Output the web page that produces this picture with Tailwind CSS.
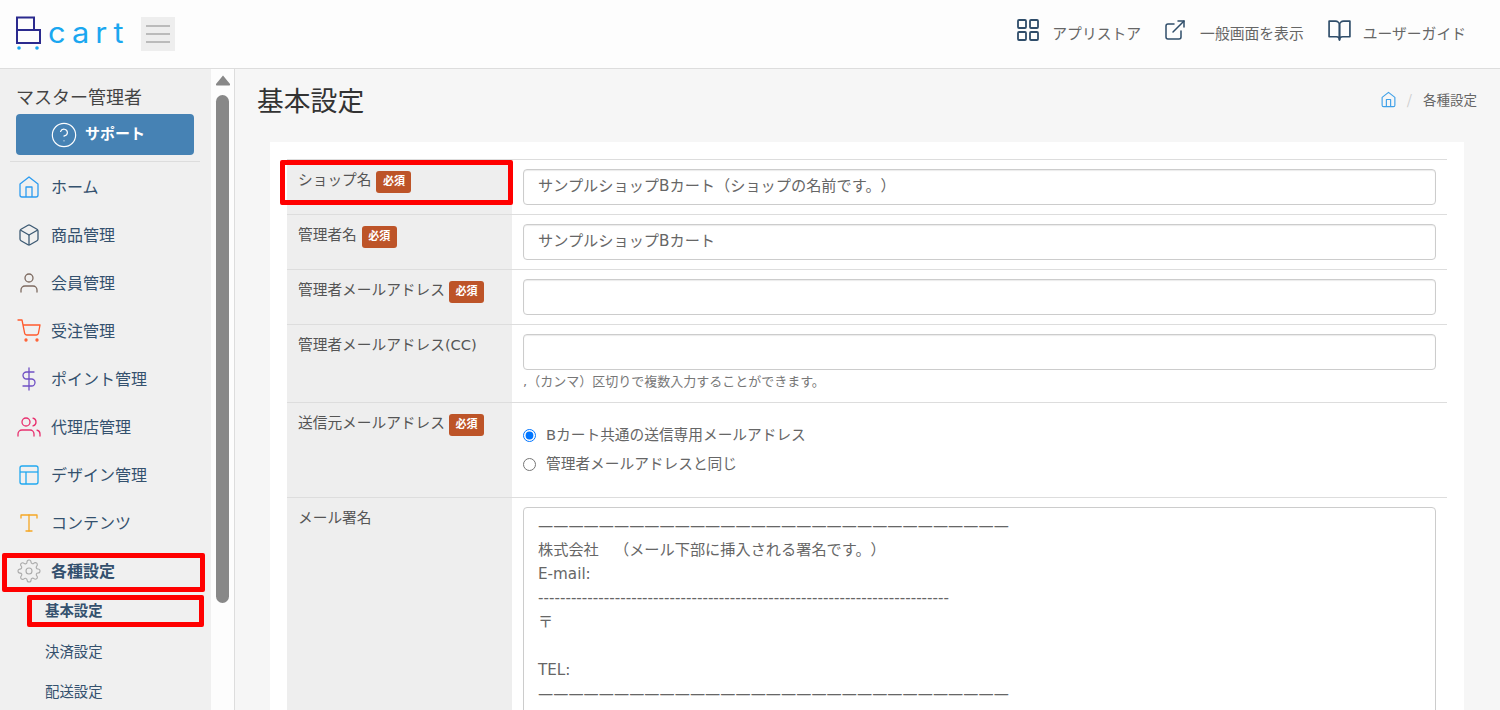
<!DOCTYPE html>
<html lang="ja">
<head>
<meta charset="utf-8">
<script src="https://cdn.jsdelivr.net/npm/@tailwindcss/browser@4"></script>
<title>基本設定</title>
</head>
<body class="h-[710px] w-[1500px] overflow-hidden bg-[#f6f6f6] font-['DejaVu_Sans','Noto_Sans_CJK_JP',sans-serif] text-[14.7px] text-[#555] [text-spacing-trim:space-all]">
<header class="flex h-[69px] items-center border-b border-[#ddd] bg-[#fdfdfd] pr-[34px] font-['Noto_Sans_CJK_JP',sans-serif]">
  <div class="relative flex h-full w-[141px] shrink-0 items-start pl-4 pt-4">
    <svg width="26" height="36" viewBox="0 0 26 36" fill="none"><path d="M1 14V1.500h17V14M1 14h23v13H1z" stroke="#2b2a8e" stroke-width="2"/><circle cx="3" cy="32" r="1.800" fill="#1aa7f0"/><circle cx="21" cy="32" r="1.800" fill="#1aa7f0"/></svg>
    <span class="ml-[6px] mt-[-1px] origin-left scale-x-110 font-['Inter',sans-serif] text-[28px] leading-[36px] font-normal tracking-[5.5px] text-[#1aa7f0]">cart</span>
  </div>
  <button class="flex h-[34px] w-[34px] shrink-0 flex-col items-center justify-center gap-[6px] bg-[#eeeeee]">
    <span class="block h-[2px] w-[24px] bg-[#bbb]"></span><span class="block h-[2px] w-[24px] bg-[#bbb]"></span><span class="block h-[2px] w-[24px] bg-[#bbb]"></span>
  </button>
  <nav class="mb-2 ml-auto flex items-center gap-[24px] text-[14.8px] text-[#666]">
    <a class="flex items-center gap-3">
      <svg width="24" height="24" viewBox="0 0 24 24" fill="none" stroke="#2f4d6a" stroke-width="1.8"><rect x="2" y="2" width="8" height="8" rx="1"/><rect x="14" y="2" width="8" height="8" rx="1"/><rect x="2" y="14" width="8" height="8" rx="1"/><rect x="14" y="14" width="8" height="8" rx="1"/></svg>
      <span class="mt-[6px]">アプリストア</span>
    </a>
    <a class="ml-[-2px] flex items-center gap-[13px]">
      <svg width="24" height="24" viewBox="0 0 24 24" fill="none" stroke="#2f4d6a" stroke-width="1.5" stroke-linecap="round" stroke-linejoin="round"><path d="M18 13v6a2 2 0 0 1-2 2H5a2 2 0 0 1-2-2V8a2 2 0 0 1 2-2h6"/><polyline points="15 3 21 3 21 9"/><line x1="10" y1="14" x2="21" y2="3"/></svg>
      <span class="mt-[6px]">一般画面を表示</span>
    </a>
    <a class="ml-[-1px] flex items-center gap-[11px]">
      <svg width="25" height="25" viewBox="0 0 24 24" fill="none" stroke="#2f4d6a" stroke-width="1.6" stroke-linejoin="round"><path d="M2 3h6a4 4 0 0 1 4 4v14a3 3 0 0 0-3-3H2z"/><path d="M22 3h-6a4 4 0 0 0-4 4v14a3 3 0 0 1 3-3h7z"/></svg>
      <span class="mt-[6px]">ユーザーガイド</span>
    </a>
  </nav>
</header>

<div class="flex h-[641px]">
  <aside class="flex h-full w-[211px] shrink-0 flex-col overflow-hidden bg-[#f0f0f0] font-['Open_Sans','Noto_Sans_CJK_JP',sans-serif] text-[16px] text-[#34516e]">
    <p class="px-4 pt-[15px] text-[18px] leading-[27px] text-[#444]">マスター管理者</p>
    <a class="mx-4 mt-[3px] flex h-[41px] w-[178px] items-center rounded bg-[#4682b4] pl-[34px] text-[15px] font-bold text-white">
      <svg width="28" height="28" viewBox="0 0 24 24" fill="none" stroke="#fff" stroke-width="1" stroke-linecap="round"><circle cx="12" cy="12" r="10"/><path d="M9.090 9a3 3 0 0 1 5.830 1c0 2-3 3-3 3"/><line x1="12" y1="17" x2="12.010" y2="17"/></svg>
      <span class="mb-[2px] ml-[7px]">サポート</span>
    </a>
    <div class="mx-[10px] mt-[6px] h-px w-[190px] bg-[#ddd]"></div>
    <ul class="mt-px">
      <li class="flex h-[48px] items-center gap-[10px] pl-[17px]"><svg width="24" height="24" viewBox="0 0 24 24" fill="none" stroke="#2d9cf0" stroke-width="1.3" stroke-linejoin="round"><path d="M3 9l9-7 9 7v11a2 2 0 0 1-2 2H5a2 2 0 0 1-2-2z"/><polyline points="9 22 9 12 15 12 15 22"/></svg>ホーム</li>
      <li class="flex h-[48px] items-center gap-[10px] pl-[17px]"><svg width="24" height="24" viewBox="0 0 24 24" fill="none" stroke="#3d5a73" stroke-width="1.3" stroke-linejoin="round"><path d="M21 16V8a2 2 0 0 0-1-1.730l-7-4a2 2 0 0 0-2 0l-7 4A2 2 0 0 0 3 8v8a2 2 0 0 0 1 1.730l7 4a2 2 0 0 0 2 0l7-4A2 2 0 0 0 21 16z"/><polyline points="3.270 6.960 12 12.010 20.730 6.960"/><line x1="12" y1="22.080" x2="12" y2="12"/></svg>商品管理</li>
      <li class="flex h-[48px] items-center gap-[10px] pl-[17px]"><svg width="24" height="24" viewBox="0 0 24 24" fill="none" stroke="#7d6a60" stroke-width="1.3" stroke-linecap="round"><path d="M20 21v-2a4 4 0 0 0-4-4H8a4 4 0 0 0-4 4v2"/><circle cx="12" cy="7" r="4"/></svg>会員管理</li>
      <li class="flex h-[48px] items-center gap-[10px] pl-[17px]"><svg width="24" height="24" viewBox="0 0 24 24" fill="none" stroke="#ff5a2c" stroke-width="1.3" stroke-linecap="round" stroke-linejoin="round"><circle cx="9" cy="21" r="1"/><circle cx="20" cy="21" r="1"/><path d="M1 1h4l2.680 13.390a2 2 0 0 0 2 1.610h9.720a2 2 0 0 0 2-1.610L23 6H6"/></svg>受注管理</li>
      <li class="flex h-[48px] items-center gap-[10px] pl-[17px]"><svg width="24" height="24" viewBox="0 0 24 24" fill="none" stroke="#6f4fc4" stroke-width="1.3" stroke-linecap="round" stroke-linejoin="round"><line x1="12" y1="1" x2="12" y2="23"/><path d="M17 5H9.500a3.500 3.500 0 0 0 0 7h5a3.500 3.500 0 0 1 0 7H6"/></svg>ポイント管理</li>
      <li class="flex h-[48px] items-center gap-[10px] pl-[17px]"><svg width="24" height="24" viewBox="0 0 24 24" fill="none" stroke="#e8316f" stroke-width="1.3" stroke-linecap="round" stroke-linejoin="round"><path d="M17 21v-2a4 4 0 0 0-4-4H5a4 4 0 0 0-4 4v2"/><circle cx="9" cy="7" r="4"/><path d="M23 21v-2a4 4 0 0 0-3-3.870"/><path d="M16 3.130a4 4 0 0 1 0 7.750"/></svg>代理店管理</li>
      <li class="flex h-[48px] items-center gap-[10px] pl-[17px]"><svg width="24" height="24" viewBox="0 0 24 24" fill="none" stroke="#20a8f0" stroke-width="1.3" stroke-linejoin="round"><rect x="3" y="3" width="18" height="18" rx="2"/><line x1="3" y1="9" x2="21" y2="9"/><line x1="9" y1="21" x2="9" y2="9"/></svg>デザイン管理</li>
      <li class="flex h-[48px] items-center gap-[10px] pl-[17px]"><svg width="24" height="24" viewBox="0 0 24 24" fill="none" stroke="#f5a623" stroke-width="1.3" stroke-linecap="round" stroke-linejoin="round"><polyline points="4 7 4 4 20 4 20 7"/><line x1="9" y1="20" x2="15" y2="20"/><line x1="12" y1="4" x2="12" y2="20"/></svg>コンテンツ</li>
      <li class="relative flex h-[48px] items-center gap-[10px] pl-[17px] font-bold"><svg width="24" height="24" viewBox="0 0 24 24" fill="none" stroke="#aaa" stroke-width="1.1" stroke-linecap="round" stroke-linejoin="round"><circle cx="12" cy="12" r="3"/><path d="M19.400 15a1.650 1.650 0 0 0 .33 1.820l.06.06a2 2 0 0 1 0 2.830 2 2 0 0 1-2.830 0l-.06-.06a1.650 1.650 0 0 0-1.820-.33 1.650 1.650 0 0 0-1 1.510V21a2 2 0 0 1-2 2 2 2 0 0 1-2-2v-.09A1.650 1.650 0 0 0 9 19.400a1.650 1.650 0 0 0-1.820.33l-.06.06a2 2 0 0 1-2.830 0 2 2 0 0 1 0-2.830l.06-.06a1.650 1.650 0 0 0 .33-1.820 1.650 1.650 0 0 0-1.510-1H3a2 2 0 0 1-2-2 2 2 0 0 1 2-2h.09A1.650 1.650 0 0 0 4.600 9a1.650 1.650 0 0 0-.33-1.820l-.06-.06a2 2 0 0 1 0-2.830 2 2 0 0 1 2.830 0l.06.06a1.650 1.650 0 0 0 1.820.33H9a1.650 1.650 0 0 0 1-1.510V3a2 2 0 0 1 2-2 2 2 0 0 1 2 2v.09a1.650 1.650 0 0 0 1 1.510 1.650 1.650 0 0 0 1.820-.33l.06-.06a2 2 0 0 1 2.830 0 2 2 0 0 1 0 2.830l-.06.06a1.650 1.650 0 0 0-.33 1.820V9a1.650 1.650 0 0 0 1.510 1H21a2 2 0 0 1 2 2 2 2 0 0 1-2 2h-.09a1.650 1.650 0 0 0-1.510 1z"/></svg>各種設定
        <span class="absolute left-[2px] top-[6px] h-[39px] w-[203px] rounded-[2px] border-[5px] border-[#ff0000]"></span></li>
    </ul>
    <ul class="flex flex-col gap-[8.5px] text-[14.4px]">
      <li class="relative flex h-[32px] items-center pl-[45px] font-bold">基本設定
        <span class="absolute left-[27px] top-0 h-[32px] w-[177px] rounded-[2px] border-[5px] border-[#ff0000]"></span></li>
      <li class="flex h-[32px] items-center pl-[45px]">決済設定</li>
      <li class="flex h-[32px] items-center pl-[45px]">配送設定</li>
    </ul>
  </aside>

  <div class="flex h-full w-[24px] shrink-0 flex-col items-center border-r border-[#ddd] bg-[#fdfdfd] pt-[6px]">
    <svg width="16" height="11" viewBox="0 0 16 11"><path d="M8 0.500l7 8.500q.5 1.500-1 1.500H2q-1.500 0-1-1.500z" fill="#888"/></svg>
    <div class="ml-[-1px] mt-[9px] h-[508px] w-[13px] rounded-full bg-[#888]"></div>
  </div>

  <main class="relative min-w-0 flex-1 pl-[35px] pr-[36px]">
    <div class="flex h-[73px] items-start justify-between font-['Noto_Sans_CJK_JP',sans-serif]">
      <h1 class="ml-[-13px] mt-[11px] text-[26.8px] leading-[40px] text-[#333]">基本設定</h1>
      <div class="mr-[-13px] mt-[20px] flex items-center text-[13.5px] text-[#666]">
        <svg width="17" height="17" viewBox="0 0 24 24" fill="none" stroke="#3ea0e8" stroke-width="1.6" stroke-linejoin="round"><path d="M3 9l9-7 9 7v11a2 2 0 0 1-2 2H5a2 2 0 0 1-2-2z"/><polyline points="9 22 9 12 15 12 15 22"/></svg>
        <span class="mx-[10px] text-[#ccc]">/</span>
        <span class="ml-[1px]">各種設定</span>
      </div>
    </div>

    <section class="h-[600px] bg-white px-[17px] pt-[17px]">
      <div class="relative flex border-t border-[#ddd]">
        <div class="w-[225px] shrink-0 bg-[#eee] pl-[11px] pt-[8px] leading-[24px]">ショップ名<span class="ml-[5px] inline-flex h-[22px] w-[35px] items-center justify-center rounded-[3px] bg-[#bd5428] text-[11px] font-bold text-white">必須</span></div>
        <div class="flex-1 pb-[9px] pl-[11px] pr-[11px] pt-[9px]"><input class="h-[36px] w-full rounded border border-[#ccc] bg-white px-[14px] pb-[7px] text-[15.2px] text-[#666] shadow-[inset_0_1px_1px_rgba(0,0,0,0.08)]" value="サンプルショップBカート（ショップの名前です。）"></div>
        <span class="absolute left-[-7px] top-0 h-[45px] w-[233px] rounded-[2px] border-[5px] border-[#ff0000]"></span>
      </div>
      <div class="flex border-t border-[#ddd]">
        <div class="w-[225px] shrink-0 bg-[#eee] pl-[11px] pt-[8px] leading-[24px]">管理者名<span class="ml-[5px] inline-flex h-[22px] w-[35px] items-center justify-center rounded-[3px] bg-[#bd5428] text-[11px] font-bold text-white">必須</span></div>
        <div class="flex-1 pb-[9px] pl-[11px] pr-[11px] pt-[9px]"><input class="h-[36px] w-full rounded border border-[#ccc] bg-white px-[14px] pb-[7px] text-[15.2px] text-[#666] shadow-[inset_0_1px_1px_rgba(0,0,0,0.08)]" value="サンプルショップBカート"></div>
      </div>
      <div class="flex border-t border-[#ddd]">
        <div class="w-[225px] shrink-0 bg-[#eee] pl-[11px] pt-[8px] leading-[24px]">管理者メールアドレス<span class="ml-[4px] inline-flex h-[22px] w-[35px] items-center justify-center rounded-[3px] bg-[#bd5428] text-[11px] font-bold text-white">必須</span></div>
        <div class="flex-1 pb-[9px] pl-[11px] pr-[11px] pt-[9px]"><input class="h-[36px] w-full rounded border border-[#ccc] bg-white px-[14px] text-[#666] shadow-[inset_0_1px_1px_rgba(0,0,0,0.08)]"></div>
      </div>
      <div class="flex border-t border-[#ddd]">
        <div class="w-[225px] shrink-0 bg-[#eee] pl-[11px] pt-[8px] leading-[24px]">管理者メールアドレス(CC)</div>
        <div class="flex-1 pb-[10px] pl-[11px] pr-[11px] pt-[9px]">
          <input class="h-[36px] w-full rounded border border-[#ccc] bg-white px-[14px] text-[#666] shadow-[inset_0_1px_1px_rgba(0,0,0,0.08)]">
          <p class="pt-px text-[13px] leading-[21px] text-[#777]">,（カンマ）区切りで複数入力することができます。</p>
        </div>
      </div>
      <div class="flex h-[95px] border-t border-[#ddd]">
        <div class="w-[225px] shrink-0 bg-[#eee] pl-[11px] pt-[8px] leading-[24px]">送信元メールアドレス<span class="ml-[4px] inline-flex h-[22px] w-[35px] items-center justify-center rounded-[3px] bg-[#bd5428] text-[11px] font-bold text-white">必須</span></div>
        <div class="flex flex-1 flex-col gap-[5px] pl-[11px] pt-[20px] leading-[24px] text-[#666]">
          <label class="flex items-center gap-[10px]"><input type="radio" name="from" checked class="m-0">Bカート共通の送信専用メールアドレス</label>
          <label class="flex items-center gap-[10px]"><input type="radio" name="from" class="m-0">管理者メールアドレスと同じ</label>
        </div>
      </div>
      <div class="flex h-[300px] border-t border-[#ddd]">
        <div class="w-[225px] shrink-0 bg-[#eee] pl-[11px] pt-[8px] leading-[24px]">メール署名</div>
        <div class="flex-1 pl-[11px] pr-[11px] pt-[9px]"><textarea class="h-[280px] w-full resize-none overflow-hidden rounded border border-[#ccc] bg-white px-[14px] py-[6px] text-[15.2px] leading-[24px] text-[#666]" rows="10">———————————————————————————————
株式会社　（メール下部に挿入される署名です。）
E-mail:
---------------------------------------------------------------------------
〒

TEL:
———————————————————————————————</textarea></div>
      </div>
    </section>
  </main>
</div>
</body>
</html>
